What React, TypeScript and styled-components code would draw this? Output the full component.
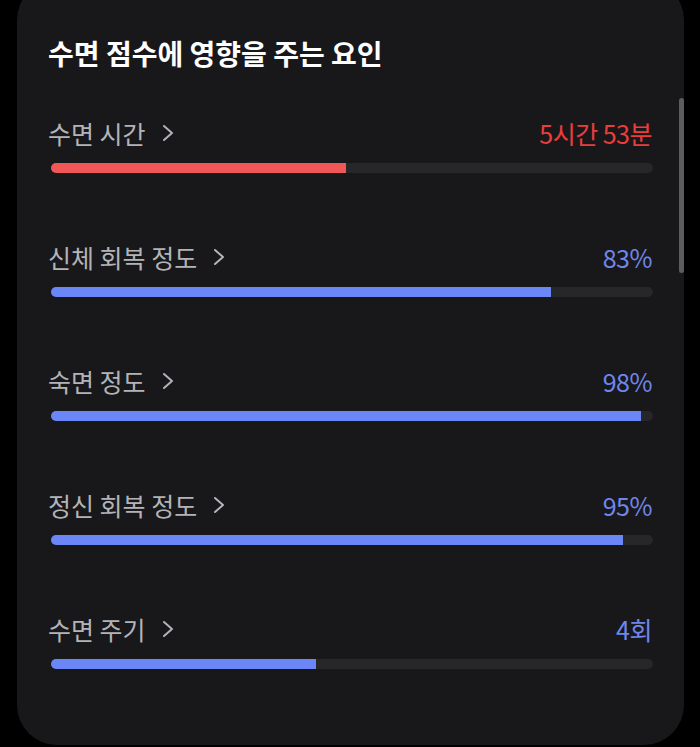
import React from 'react'
import styled, { createGlobalStyle } from 'styled-components'

const GlobalStyle = createGlobalStyle`
  html, body {
    margin: 0;
    padding: 0;
    background: #000;
    overflow: hidden;
  }
  body {
    font-family: "Noto Sans CJK KR", "Noto Sans", sans-serif;
  }
`

const Page = styled.div`
  width: 700px;
  height: 747px;
  background: #000;
  overflow: hidden;
`

const Card = styled.div`
  position: relative;
  box-sizing: border-box;
  margin: -20px 0 0 17px;
  width: 667px;
  height: 765px;
  background: #18181b;
  border-radius: 40px;
  padding: 55px 31px 0 31px;
`

const ScrollThumb = styled.div`
  position: absolute;
  right: 0;
  top: 118px;
  width: 5px;
  height: 175px;
  border-radius: 3px;
  background: #5c5c60;
`

const Title = styled.h2`
  margin: 0 0 47px 0;
  font-size: 28px;
  line-height: 36px;
  font-weight: 700;
  color: #ffffff;
`

const Row = styled.div`
  height: 124px;
  display: flex;
  flex-direction: column;
`

const RowHead = styled.div`
  display: flex;
  align-items: center;
  justify-content: space-between;
  height: 30px;
  margin-bottom: 15px;
`

const Label = styled.div`
  display: flex;
  align-items: center;
  gap: 16px;
  font-size: 25px;
  line-height: 30px;
  font-weight: 400;
  color: #b4b4b8;
`

const Value = styled.div<{ $tone: 'red' | 'blue' }>`
  font-size: 25px;
  line-height: 30px;
  font-weight: 400;
  color: ${p => (p.$tone === 'red' ? '#ec3d3d' : '#6f86ea')};
  margin-right: 1px;
  letter-spacing: -0.5px;
`

const Track = styled.div`
  margin-left: 3px;
  height: 10px;
  border-radius: 5px;
  background: #27272a;
  overflow: hidden;
`

const Fill = styled.div<{ $tone: 'red' | 'blue' }>`
  height: 100%;
  background: ${p => (p.$tone === 'red' ? '#f25757' : '#6a86f7')};
`

const Chevron = () => (
  <svg width="12" height="18" viewBox="0 0 12 18" fill="none">
    <polyline points="2,2 10,9 2,16" stroke="#b4b4b8" strokeWidth="2" strokeLinecap="round" strokeLinejoin="round" />
  </svg>
)

type Factor = { label: string; value: string; pct: number; tone: 'red' | 'blue' }

const factors: Factor[] = [
  { label: '수면 시간', value: '5시간 53분', pct: 49, tone: 'red' },
  { label: '신체 회복 정도', value: '83%', pct: 83, tone: 'blue' },
  { label: '숙면 정도', value: '98%', pct: 98, tone: 'blue' },
  { label: '정신 회복 정도', value: '95%', pct: 95, tone: 'blue' },
  { label: '수면 주기', value: '4회', pct: 44, tone: 'blue' },
]

function App() {
  return (
    <Page>
      <GlobalStyle />
      <Card>
        <ScrollThumb />
        <Title>수면 점수에 영향을 주는 요인</Title>
        {factors.map(f => (
          <Row key={f.label}>
            <RowHead>
              <Label>
                {f.label}
                <Chevron />
              </Label>
              <Value $tone={f.tone}>{f.value}</Value>
            </RowHead>
            <Track>
              <Fill $tone={f.tone} style={{ width: `${f.pct}%` }} />
            </Track>
          </Row>
        ))}
      </Card>
    </Page>
  )
}

export default App
